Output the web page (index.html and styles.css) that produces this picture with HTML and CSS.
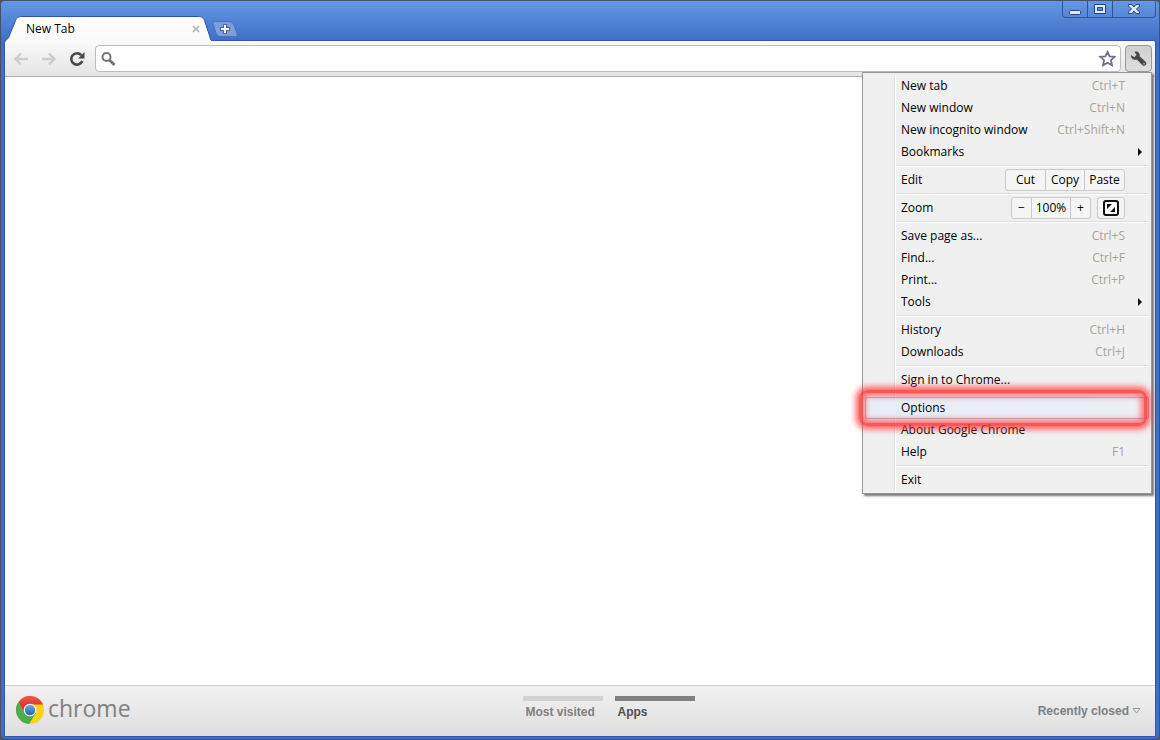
FILE: index.html
```html
<!DOCTYPE html>
<html lang="en">
<head>
<meta charset="utf-8">
<title>New Tab</title>
<link rel="stylesheet" href="styles.css">
</head>
<body>
<div class="window">
  <header class="titlebar">
    <div class="tabs" role="tablist">
      <div class="tab" role="tab" aria-selected="true">
        <svg class="tab-shape" width="208" height="25" viewBox="0 0 208 25" aria-hidden="true">
          <defs><linearGradient id="tabFill" x1="0" y1="0" x2="0" y2="1"><stop offset="0" stop-color="#fff"/><stop offset="1" stop-color="#fafafa"/></linearGradient></defs>
          <path d="M0 25 C4 24 5 21 6 18 L11 6 C12 2 14 .5 18 .5 H194 C198 .5 200 2 201 6 L205 18 C206 21 206 24 208 25" fill="url(#tabFill)" stroke="#2d55a5"/>
        </svg>
        <span class="tab-title">New Tab</span>
        <button class="tab-close" aria-label="Close tab"><svg width="8" height="8" viewBox="0 0 8 8"><path d="M1 1l6 6M7 1L1 7" stroke="#b0b0b0" stroke-width="1.5"/></svg></button>
      </div>
      <button class="new-tab" aria-label="New tab">
        <svg width="26" height="16" viewBox="0 0 26 16"><path d="M2.500 .5H17C20 .5 21 2 22 4L25 13C25.500 15 25 15.500 23 15.500H8C6 15.500 5 14 4 12L1 3C.5 1.500 1 .5 2.500 .5Z" fill="#7d9edb" stroke="#4a70bd"/><path d="M13 3v10M8 8h10" stroke="#4567a6" stroke-width="4"/><path d="M13 4v8M9 8h8" stroke="#fff" stroke-width="2"/></svg>
      </button>
    </div>
    <div class="controls">
      <button aria-label="Minimize"><svg width="14" height="12" viewBox="0 0 14 12"><rect x="1.500" y="7.500" width="11" height="4" rx="1" fill="#dce9fc" stroke="#27457f"/></svg></button>
      <button aria-label="Maximize"><svg width="14" height="12" viewBox="0 0 14 12"><path fill-rule="evenodd" d="M1.500 1.500h11v9h-11zM4.500 4.500h5v3h-5z" fill="#dce9fc" stroke="#27457f"/></svg></button>
      <button class="close" aria-label="Close"><svg width="14" height="12" viewBox="0 0 14 12"><path d="M1.500 1.500H5L7 4 9 1.500H12.500V3L9.500 6 12.500 9V10.500H9L7 8 5 10.500H1.500V9L4.500 6 1.500 3Z" fill="#dce9fc" stroke="#27457f"/></svg></button>
    </div>
  </header>
  <div class="browser">
    <nav class="toolbar" aria-label="Navigation">
      <button class="nav" aria-label="Back" disabled><svg width="16" height="16" viewBox="0 0 16 16"><path d="M15 8H3M8 2.500L2.500 8 8 13.500" fill="none" stroke="#cdcdcd" stroke-width="2.400"/></svg></button>
      <button class="nav" aria-label="Forward" disabled><svg width="16" height="16" viewBox="0 0 16 16"><path d="M1 8h12M8 2.500L13.500 8 8 13.500" fill="none" stroke="#cdcdcd" stroke-width="2.400"/></svg></button>
      <button class="nav" aria-label="Reload"><svg width="16" height="16" viewBox="0 0 16 16"><path d="M12.300 4.200A5.700 5.700 0 1 0 13.300 10" fill="none" stroke="#484848" stroke-width="2.600"/><path d="M15.500 1v6.500H9z" fill="#484848"/></svg></button>
      <form class="omnibox">
        <svg width="16" height="16" viewBox="0 0 16 16" aria-hidden="true"><circle cx="6.500" cy="6" r="4" fill="none" stroke="#747474" stroke-width="2"/><path d="M9.500 9l5 5" stroke="#747474" stroke-width="3"/></svg>
        <input type="text" aria-label="Address and search">
        <button type="button" aria-label="Bookmark this page"><svg width="18" height="18" viewBox="0 0 18 18"><path d="M9.500 1.800L11.600 6.300 16.700 6.800 12.900 10.200 14 15.300 9.500 12.700 5 15.300 6.100 10.200 2.300 6.800 7.400 6.300Z" fill="#fff" stroke="#68738f" stroke-width="1.800"/></svg></button>
      </form>
      <div class="wrench-wrap">
        <button class="wrench" aria-label="Customize and control" aria-expanded="true"><svg width="18" height="18" viewBox="0 0 18 18"><path d="M1 5L4.300 7.200 6.500 5 4.500 1.700C7.300 .8 10.300 2.800 9.700 6.300L15.800 12C17.500 14.300 15 16.800 12.500 15.200L6.700 9.600C3.300 10.500 .5 8 1 5Z" fill="#484848"/><circle cx="14" cy="13.700" r=".9" fill="#aaa"/></svg></button>
        <div class="menu" role="menu">
          <button class="item" role="menuitem"><span>New tab</span><kbd>Ctrl+T</kbd></button>
          <button class="item" role="menuitem"><span>New window</span><kbd>Ctrl+N</kbd></button>
          <button class="item" role="menuitem"><span>New incognito window</span><kbd>Ctrl+Shift+N</kbd></button>
          <button class="item sub" role="menuitem"><span>Bookmarks</span></button>
          <hr>
          <div class="item"><span>Edit</span><div class="group edit"><button>Cut</button><button>Copy</button><button class="paste">Paste</button></div></div>
          <hr>
          <div class="item"><span>Zoom</span><div class="zoom"><div class="group"><button class="step" aria-label="Zoom out">−</button><button class="level">100%</button><button class="step plus" aria-label="Zoom in">+</button></div><div class="group"><button class="full" aria-label="Full screen"><svg width="16" height="16" viewBox="0 0 16 16"><rect x="1" y="1" width="14" height="14" rx="2" fill="#fff" stroke="#111" stroke-width="2"/><path d="M4 4h5L4 9zM12 12H7l5-5z" fill="#111"/></svg></button></div></div></div>
          <hr>
          <button class="item" role="menuitem"><span>Save page as...</span><kbd>Ctrl+S</kbd></button>
          <button class="item" role="menuitem"><span>Find...</span><kbd>Ctrl+F</kbd></button>
          <button class="item" role="menuitem"><span>Print...</span><kbd>Ctrl+P</kbd></button>
          <button class="item sub" role="menuitem"><span>Tools</span></button>
          <hr>
          <button class="item" role="menuitem"><span>History</span><kbd>Ctrl+H</kbd></button>
          <button class="item" role="menuitem"><span>Downloads</span><kbd>Ctrl+J</kbd></button>
          <hr>
          <button class="item" role="menuitem"><span>Sign in to Chrome...</span></button>
          <hr>
          <button class="item selected" role="menuitem"><span>Options</span></button>
          <button class="item" role="menuitem"><span>About Google Chrome</span></button>
          <button class="item" role="menuitem"><span>Help</span><kbd>F1</kbd></button>
          <hr>
          <button class="item" role="menuitem"><span>Exit</span></button>
        </div>
      </div>
    </nav>
    <main class="page"></main>
    <footer class="footer">
      <div class="brand">
        <svg width="28" height="28" viewBox="0 0 28 28" aria-hidden="true">
          <defs><linearGradient id="red" x1="0" y1="0" x2="0" y2="1"><stop offset="0" stop-color="#ef5b50"/><stop offset="1" stop-color="#cb1f1f"/></linearGradient><linearGradient id="blue" x1="0" y1="0" x2="0" y2="1"><stop offset="0" stop-color="#74a9dc"/><stop offset="1" stop-color="#2164ac"/></linearGradient></defs>
          <circle cx="14" cy="14" r="14" fill="#fdd315"/>
          <path d="M14 14L8.500 17.500 2.500 6A14 14 0 0 0 13 28L20 17Z" fill="#4bac4b"/>
          <path d="M2.500 6A14 14 0 0 1 27 8.500H14L8 16Z" fill="url(#red)"/>
          <circle cx="14" cy="14" r="6.300" fill="#f4f5f5"/><circle cx="14" cy="14" r="5.200" fill="url(#blue)"/>
        </svg>
        <span>chrome</span>
      </div>
      <div class="sections"><button>Most visited</button><button class="active">Apps</button></div>
      <button class="recent">Recently closed <svg width="9" height="6" viewBox="0 0 9 6" aria-hidden="true"><path d="M1 .5h7L4.500 5Z" fill="none" stroke="#999"/></svg></button>
    </footer>
  </div>
</div>
</body>
</html>
```
FILE: styles.css
```css
* { box-sizing: border-box; }
body { margin: 0; background: #50545b; font-family: "Open Sans", "Noto Sans", sans-serif; font-size: 12px; color: #000; }
button { margin: 0; padding: 0; border: 0; background: none; font: inherit; color: inherit; }
svg { display: block; }

.window { display: flex; flex-direction: column; height: 100vh; padding: 0 3px 2px; border: 1px solid #45526b; border-radius: 4px 4px 6px 6px; background: linear-gradient(#6697e2, #3f6ec9 40px, #3f6ec9); }
.titlebar { display: flex; justify-content: space-between; height: 39px; }
.tabs { display: flex; align-items: flex-end; }
.tab { position: relative; display: flex; align-items: center; justify-content: space-between; width: 208px; height: 25px; padding: 0 12px 0 22px; z-index: 1; margin-bottom: -1px; }
.tab-shape { position: absolute; inset: 0; }
.tab-title { position: relative; }
.tab-close { position: relative; }
.new-tab { margin-bottom: 3px; }
.controls { display: flex; height: 17px; border: 1px solid #2f559f; border-top: 0; border-radius: 0 0 4px 4px; }
.controls button { display: flex; align-items: center; justify-content: center; width: 25px; border-right: 1px solid #2f559f; }
.controls .close { width: 42px; border-right: 0; }

.browser { display: flex; flex-direction: column; flex: 1; border: 1px solid #2f59ad; border-radius: 3px 3px 0 0; background: #fff; }
.toolbar { display: flex; align-items: center; height: 36px; padding: 0 3px 0 6px; border-bottom: 1px solid #b0b0b3; border-radius: 3px 3px 0 0; background: linear-gradient(#fafafa, #e4e4e4); }
.nav { display: flex; justify-content: center; width: 20px; margin-right: 8px; }
.omnibox { display: flex; align-items: center; flex: 1; height: 27px; margin-right: 4px; padding: 0 4px; border: 1px solid #bcbcbc; border-radius: 4px; background: #fff; }
.omnibox input { flex: 1; min-width: 0; border: 0; outline: 0; background: none; font: inherit; }
.wrench-wrap { position: relative; }
.wrench { display: flex; align-items: center; justify-content: center; width: 27px; height: 27px; border: 1px solid #999; border-radius: 4px; background: linear-gradient(#cfcfcf, #dedede); }

.menu { position: absolute; top: 100%; right: 0; z-index: 2; width: 290px; padding: 2px; border: 1px solid #979797; background: linear-gradient(#e0e0e0, #e0e0e0) 31px 2px / 1px calc(100% - 4px) no-repeat, linear-gradient(#fff, #fff) 32px 2px / 1px calc(100% - 4px) no-repeat, #f0f0f0; box-shadow: 2px 2px 2px #777; }
.item { display: flex; align-items: center; justify-content: space-between; width: 100%; height: 22px; padding: 0 24px 0 36px; line-height: 20px; text-align: left; }
.item kbd { color: #a5a598; font: inherit; }
.menu hr { height: 2px; margin: 2px 0 2px 31px; border: 0; border-top: 1px solid #dfdfdf; background: #fff; }
.sub::after { content: ""; margin-right: -17px; border: 4px solid transparent; border-left-color: #111; border-right-width: 0; }
.group { display: flex; height: 22px; border: 1px solid #cacaca; border-radius: 3px; background: #f5f5f5; }
.group button { display: flex; align-items: center; justify-content: center; padding-bottom: 1px; }
.group button + button { border-left: 1px solid #cacaca; }
.edit button { width: 39px; }
.edit .paste { width: 40px; }
.zoom { display: flex; gap: 6px; }
.group .step { width: 19px; }
.group .level { width: 39px; }
.group .plus { width: 20px; }
.group .full { width: 26px; padding: 0; }
.selected { position: relative; border-radius: 2px; background: linear-gradient(90deg, #e6edf7, #ecf0f8); box-shadow: inset 0 0 0 1px #aab8e0; }
.selected::after { content: ""; position: absolute; inset: -7px 2px -7px -6px; border: 3px solid rgba(255, 48, 48, .8); border-radius: 8px; box-shadow: 0 0 6px 3px rgba(255, 48, 48, .8), inset 0 0 6px 3px rgba(255, 48, 48, .7); }

.page { flex: 1; }
.footer { display: grid; grid-template-columns: 1fr auto 1fr; align-items: center; height: 51px; padding: 0 14px 0 11px; border-top: 1px solid #d0d0d0; background: linear-gradient(#f2f2f2, #dedede); color: #808080; font: bold 12px "Liberation Sans", sans-serif; }
.brand { display: flex; align-items: center; gap: 4px; padding-bottom: 2px; font: 23px/24px "Open Sans", "Noto Sans", sans-serif; }
.brand span { padding-bottom: 4px; }
.sections { display: flex; align-self: start; gap: 12px; padding: 10px 0 0 60px; }
.sections button { width: 80px; padding: 4px 3px 0; border-top: 5px solid #d3d3d3; text-align: left; }
.sections .active { border-color: #808080; color: #505050; }
.recent { display: flex; align-items: center; justify-self: end; gap: 3px; }
```
